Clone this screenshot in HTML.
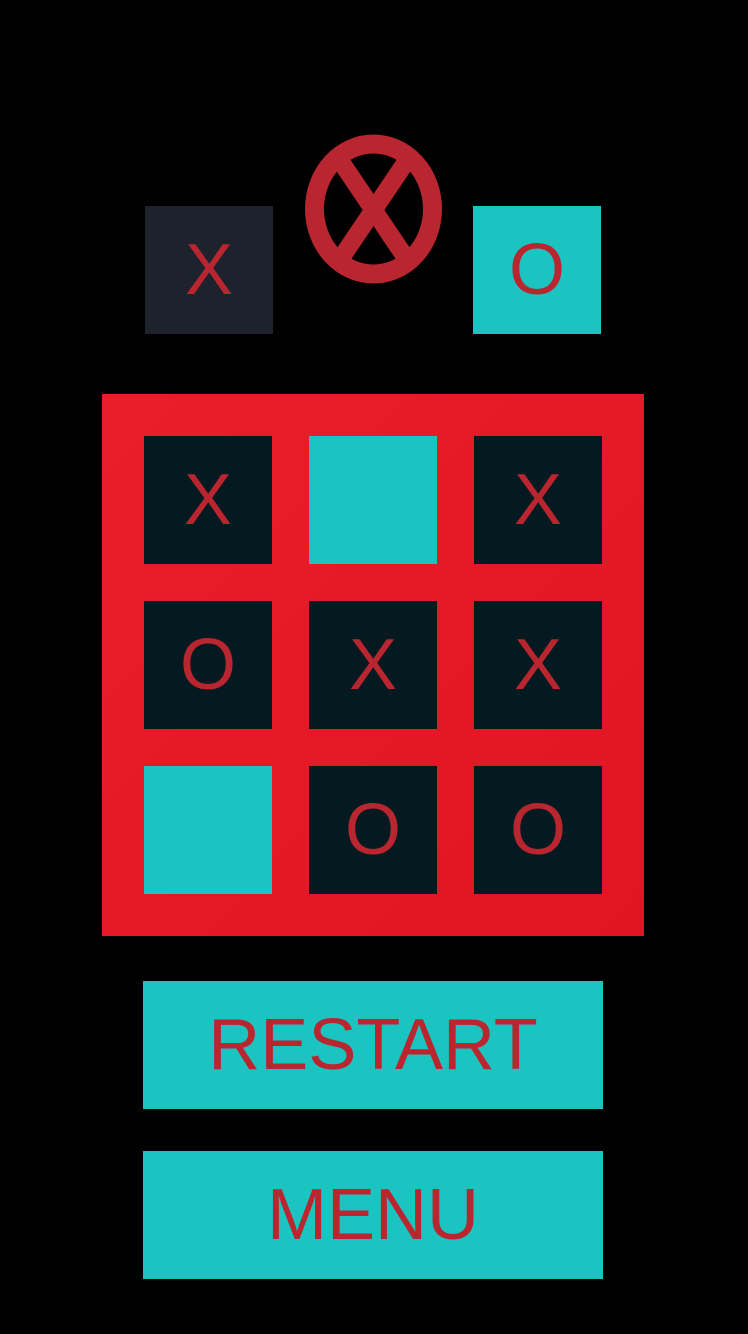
<!DOCTYPE html>
<html><head><style>
html,body{margin:0;padding:0;background:#000;width:748px;height:1334px;overflow:hidden;position:relative;font-family:"Liberation Sans",sans-serif}
.a{position:absolute;display:flex;align-items:center;justify-content:center;color:#b9262f}
.c{width:128px;height:128px;background:#041920;font-size:72px}
.t{background:#1bc4c0}
.b{left:143px;width:460px;height:128px;background:#1bc4c0;font-size:72px}
</style></head><body>
<div class="a" style="left:145px;top:206px;width:128px;height:128px;background:#1e222c;font-size:72px">X</div>
<div class="a" style="left:473px;top:206px;width:128px;height:128px;background:#1bc4c0;font-size:72px">O</div>
<svg style="position:absolute;left:0;top:0" width="748" height="400">
<defs><clipPath id="e"><ellipse cx="373.5" cy="209" rx="60" ry="66"/></clipPath></defs>
<g clip-path="url(#e)" stroke="#b9262f" stroke-width="18">
<line x1="333" y1="150" x2="414" y2="270"/><line x1="414" y1="150" x2="333" y2="270"/></g>
<ellipse cx="373.5" cy="209" rx="59" ry="65" fill="none" stroke="#b9262f" stroke-width="19"/>
</svg>
<div style="position:absolute;left:102px;top:394px;width:542px;height:542px;background:linear-gradient(135deg,#e81e2b,#df1524)"></div>
<div class="a c" style="left:144px;top:436px">X</div>
<div class="a c t" style="left:309px;top:436px"></div>
<div class="a c" style="left:474px;top:436px">X</div>
<div class="a c" style="left:144px;top:601px">O</div>
<div class="a c" style="left:309px;top:601px">X</div>
<div class="a c" style="left:474px;top:601px">X</div>
<div class="a c t" style="left:144px;top:766px"></div>
<div class="a c" style="left:309px;top:766px">O</div>
<div class="a c" style="left:474px;top:766px">O</div>
<div class="a b" style="top:981px">RESTART</div>
<div class="a b" style="top:1151px">MENU</div>
</body></html>
